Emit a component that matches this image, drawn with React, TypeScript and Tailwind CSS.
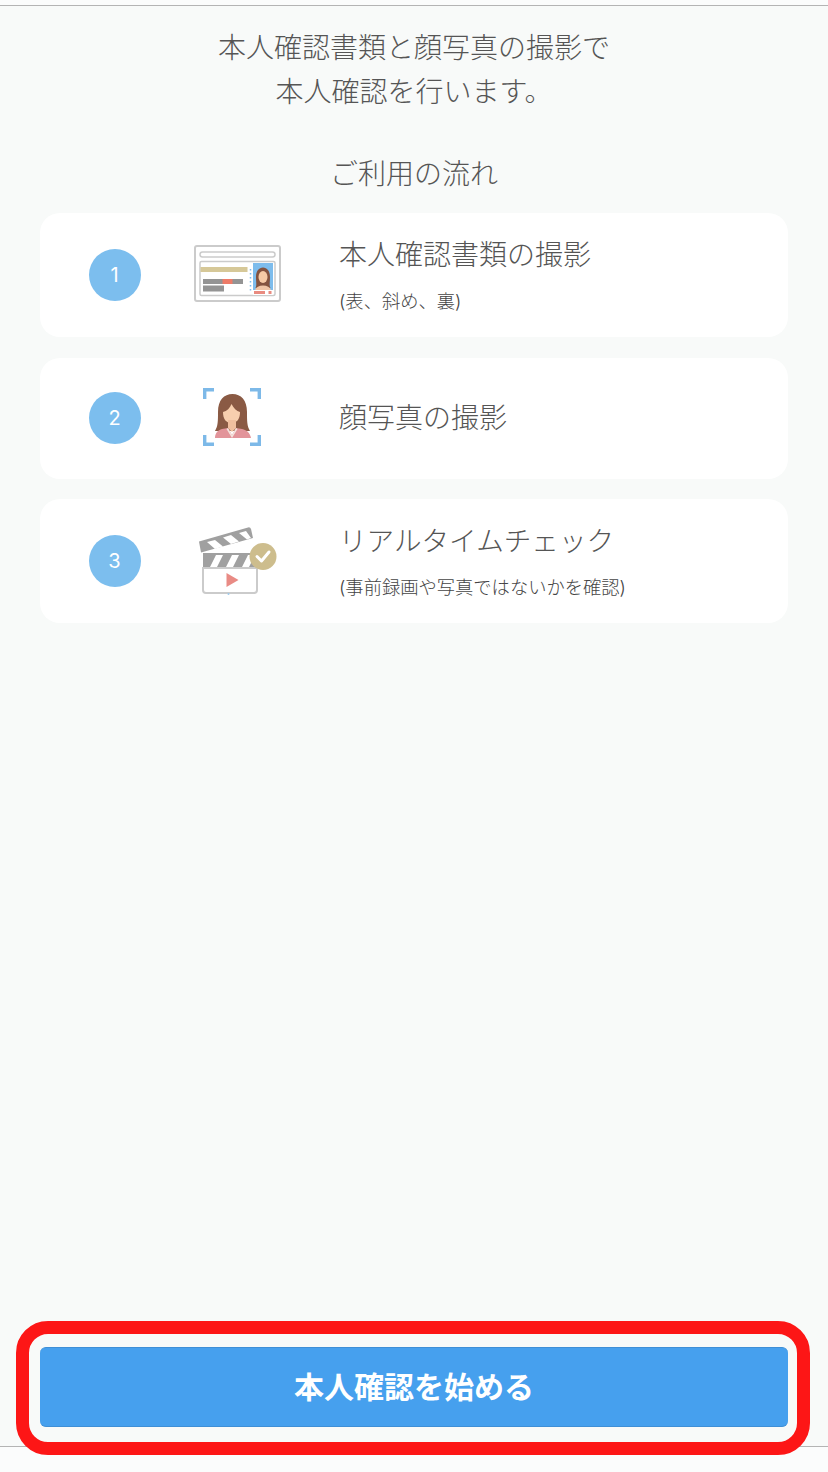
const FONT = "font-['Inter','Noto_Sans_CJK_JP',sans-serif]";

const IdCardIcon = () => (
  <svg width="90" height="60" viewBox="0 0 90 60" fill="none">
    <rect x="2" y="1" width="85" height="55" rx="2" fill="#fff" stroke="#cbcbcb" strokeWidth="2" />
    <rect x="7" y="7" width="75" height="5" rx="2.5" fill="#fff" stroke="#cbcbcb" strokeWidth="1.5" />
    <rect x="7" y="16.5" width="75" height="34" rx="1.5" fill="#fff" stroke="#cbcbcb" strokeWidth="1.5" />
    <rect x="7.5" y="22" width="47" height="5" fill="#d6c898" />
    <rect x="10" y="34" width="40" height="5" fill="#949494" />
    <rect x="29.5" y="34" width="10" height="5" fill="#ee7b68" />
    <rect x="10" y="40.5" width="21" height="6" fill="#949494" />
    <rect x="60" y="18" width="20" height="32" fill="#7dbcec" />
    <path d="M62.5 43c1.5-3 .5-5 .5-11 0-6 3-9.500 7-9.500s7 3.500 7 9.500c0 6-1 8 .5 11z" fill="#84533f" />
    <ellipse cx="70" cy="32" rx="4.500" ry="6" fill="#f6caa5" />
    <path d="M62 45c1-3 4-4.500 8-4.500s7 1.500 8 4.500z" fill="#f0c5a6" />
    <rect x="60" y="45" width="20" height="5" fill="#fff" />
    <rect x="61" y="46" width="11" height="3" fill="#e98b80" />
    <rect x="75.500" y="46" width="3" height="3" fill="#e98b80" />
    <path d="M57.500 24v24" stroke="#7dbcec" strokeWidth="1.5" strokeDasharray="1.5 2.5" />
  </svg>
);

const FaceIcon = () => (
  <svg className="mr-[10px]" width="60" height="60" viewBox="0 0 60 60" fill="none">
    <path d="M11 1.700H1.700V11M47 1.700h9.300V11M1.700 47v9.300H11M56.300 47v9.300H47" stroke="#7db9e8" strokeWidth="3.400" />
    <path d="M12 43c3-5 3-10 3-19C15 12 21 6 29.500 6S44 12 44 24c0 9 0 14 3 19z" fill="#8a5a44" />
    <path d="M20 24c4-1 7-4 8.500-8 2 4 5 7 8.500 8 0 7-3 11-8.500 11S20 31 20 24z" fill="#f7cfae" />
    <path d="M25 32h8v8l-4 4-4-4z" fill="#f0bf9f" />
    <path d="M12 50c0-5 3-8 7-9l6-1 4 7 4-7 6 1c5 1 8 4 9 9z" fill="#e2949a" />
    <path d="M25 40l4 7 4-7 1.500 1-5.500 9-5.500-9z" fill="#f3e2dc" />
  </svg>
);

const ClapperIcon = () => (
  <svg width="80" height="68" viewBox="0 0 80 68" fill="none">
    {/* top slab */}
    <path d="M1 14.500 50 .5a2.500 2.500 0 0 1 3 1.500L55 11 3 25.500z" fill="#a0a0a0" />
    <path d="M9 15 17 13l8 6.500-8 2.500zM25 10.500l8-2.500 8 6.500-8 2.500zM41 6 48 4l5 7-4 1.500z" fill="#fff" />
    {/* lower band */}
    <rect x="5" y="26" width="54" height="15" fill="#a0a0a0" />
    <path d="M12 40l6-12h7l-6 12zM28 40l6-12h7l-6 12zM44 40l6-12h7l-6 12z" fill="#fff" />
    {/* body */}
    <path d="M5 41h54v22a3 3 0 0 1-3 3H8a3 3 0 0 1-3-3z" fill="#fff" stroke="#cbcbcb" strokeWidth="2" />
    <path d="M28.500 46l12 7-12 7z" fill="#e98b85" />
    <circle cx="30.500" cy="67" r="1" fill="#9cc9ec" />
    <circle cx="65" cy="29.500" r="13.500" fill="#cdbd8d" />
    <path d="M59 29.500l4.500 4.500L71 25" stroke="#fff" strokeWidth="3" strokeLinecap="round" strokeLinejoin="round" />
  </svg>
);

const steps = [
  { n: 1, title: "本人確認書類の撮影", titleSize: "text-[28px]", sub: "(表、斜め、裏)", icon: <IdCardIcon />, h: "h-[124px]" },
  { n: 2, title: "顔写真の撮影", titleSize: "text-[28px]", sub: "", icon: <FaceIcon />, h: "mt-[1px] h-[121px] pb-[1px]" },
  { n: 3, title: "リアルタイムチェック", titleSize: "text-[27.600px]", sub: "(事前録画や写真ではないかを確認)", icon: <ClapperIcon />, h: "h-[124px]" },
];

const StepCard = ({ step }: { step: (typeof steps)[number] }) => (
  <div className={`flex items-center rounded-[20px] bg-white pl-[49px] ${step.h}`}>
    <div className="flex h-[52px] w-[52px] shrink-0 items-center justify-center rounded-full bg-[#7cbeee] pr-[1px] text-[20px] text-white">
      {step.n}
    </div>
    <div className="flex w-[198px] shrink-0 justify-center pr-[5px]">{step.icon}</div>
    <div className={`flex flex-col ${step.sub ? "pb-[3px]" : ""}`}>
      <div className={`${step.titleSize} leading-[42px] font-light text-[#555]`}>{step.title}</div>
      {step.sub && <div className="mt-[13px] text-[18.300px] leading-[24px] font-light text-[#444]">{step.sub}</div>}
    </div>
  </div>
);

export default function App() {
  return (
    <div className={`relative flex h-[1472px] w-[828px] flex-col overflow-hidden bg-[#f8faf9] ${FONT}`}>
      <div className="h-[6px] shrink-0 border-b border-[#b4b4b4] bg-[#fbfcfc]" />
      <div className="flex flex-1 flex-col px-[40px]">
        <div className="mt-[20px] text-center text-[28px] leading-[44px] font-light text-[#555]">
          本人確認書類と顔写真の撮影で
          <br />
          本人確認を行います。
        </div>
        <div className="mt-[40px] text-center text-[28px] leading-[40px] font-light text-[#555]">ご利用の流れ</div>
        <div className="mt-[19px] flex flex-col gap-[20px]">
          {steps.map((s) => (
            <StepCard key={s.n} step={s} />
          ))}
        </div>
        <button className="mt-auto mb-[19px] h-[80px] w-full rounded-[6px] border-y border-y-[#3f8fd6] bg-[#46a0ee] text-[30px] font-bold text-white">
          本人確認を始める
        </button>
      </div>
      <div className="h-[26px] shrink-0 border-t border-[#b4b4b4] bg-[#fbfcfc]" />
      {/* red highlight over the button */}
      <div className="absolute top-[1321px] left-[16px] h-[134px] w-[794px] rounded-[32px] border-[13px] border-[#fd1616]" />
    </div>
  );
}
